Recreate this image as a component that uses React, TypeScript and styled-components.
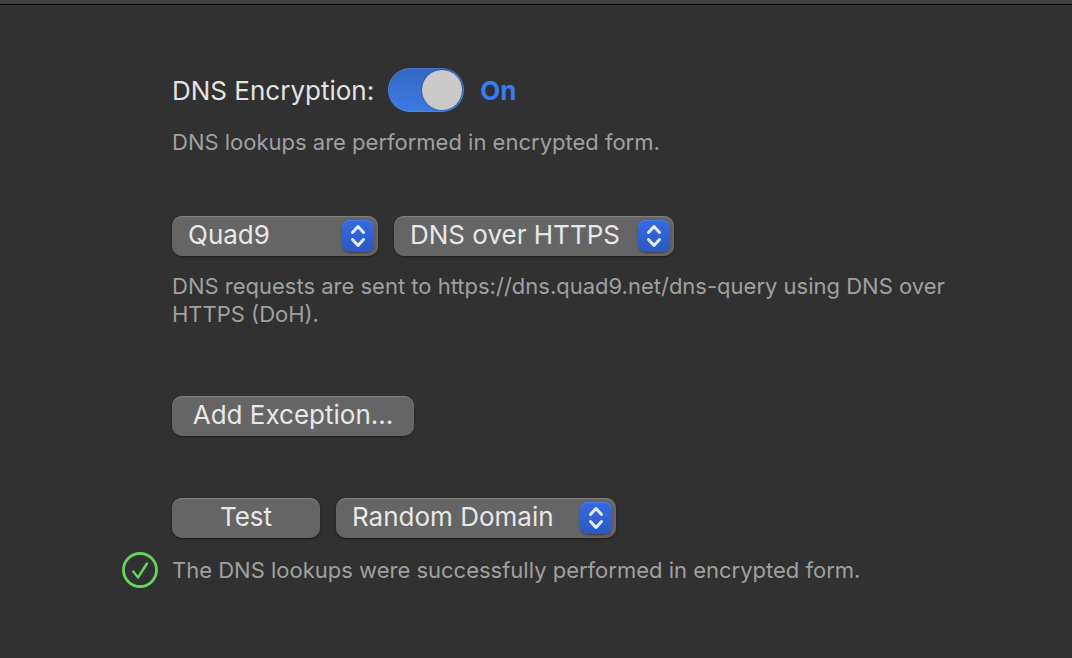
import React, { useState } from "react";
import styled, { createGlobalStyle } from "styled-components";

const GlobalStyle = createGlobalStyle`
  * { box-sizing: border-box; }
  body {
    margin: 0;
    background: #313131;
    color: #e3e3e3;
    font-family: Inter, "Liberation Sans", sans-serif;
    font-size: 26px;
    line-height: 32px;
  }
`;

const TitleEdge = styled.header`
  height: 5px;
  background: #404040;
  border-bottom: 1px solid #000;
`;

const Pane = styled.main`
  display: flex;
  flex-direction: column;
  align-items: flex-start;
  padding: 63px 100px 64px 172px;
`;

const Section = styled.section<{ $after?: number }>`
  width: 100%;
  margin-bottom: ${(p) => p.$after ?? 0}px;
`;

const Row = styled.div<{ $gap?: number }>`
  display: flex;
  align-items: center;
  gap: ${(p) => p.$gap ?? 16}px;
`;

const FieldLabel = styled.label`
  white-space: nowrap;
  padding-top: 2px;
`;

const Switch = styled.input`
  appearance: none;
  display: flex;
  align-items: center;
  width: 76px;
  height: 44px;
  margin: 0;
  padding: 2px;
  border-radius: 22px;
  background: #4b4b4b;
  box-shadow: inset 0 0 1px 1px rgba(255, 255, 255, 0.1);

  &::before {
    content: "";
    width: 40px;
    height: 40px;
    border-radius: 50%;
    background: #cacaca;
    box-shadow: 0 0 2px rgba(0, 0, 0, 0.5);
  }

  &:checked {
    justify-content: flex-end;
    background: linear-gradient(#3469c4, #3b7ae2);
  }
`;

const SwitchState = styled.strong`
  padding: 2px 0 0 2px;
  color: #3a7bf6;
  font-weight: 700;
`;

const Note = styled.p`
  margin: 16px 0 0;
  color: #a0a0a0;
  font-size: 22px;
  line-height: 28px;
`;

const Button = styled.button<{ $width: number }>`
  width: ${(p) => p.$width}px;
  height: 40px;
  padding: 0 0 2px;
  border: 0;
  border-radius: 10px;
  background: #656565;
  color: #e8e8e8;
  font: inherit;
  box-shadow: inset 0 1px 1px #838383, 0 1px 2px rgba(0, 0, 0, 0.45);
`;

const PopUp = styled.div<{ $width: number }>`
  display: grid;
  align-items: center;
  width: ${(p) => p.$width}px;
  height: 40px;
  border-radius: 10px;
  background: #656565;
  box-shadow: inset 0 1px 1px #838383, 0 1px 2px rgba(0, 0, 0, 0.45);

  & > * { grid-area: 1 / 1; }
`;

const PopUpSelect = styled.select`
  appearance: none;
  width: 100%;
  height: 40px;
  padding: 0 40px 2px 16px;
  border: 0;
  border-radius: 10px;
  background: transparent;
  color: #e8e8e8;
  font: inherit;
`;

const Stepper = styled.span`
  display: flex;
  justify-self: end;
  margin-right: 4px;
  border-radius: 8px;
  background: linear-gradient(#356ae0, #2a59c5);
  box-shadow: inset 0 1px 1px #4f7fe6, 0 1px 2px rgba(0, 0, 0, 0.4);
  pointer-events: none;
`;

const Status = styled.div`
  display: flex;
  align-items: center;
  gap: 14px;
  margin: 14px 0 0 -50px;
  color: #a0a0a0;
  font-size: 22px;
  line-height: 28px;
`;

const StatusIcon = styled.svg`
  flex: none;
`;

function Select({ label, width, options }: { label: string; width: number; options: string[] }) {
  return (
    <PopUp $width={width}>
      <PopUpSelect aria-label={label}>
        {options.map((o) => (
          <option key={o}>{o}</option>
        ))}
      </PopUpSelect>
      <Stepper>
        <svg width="32" height="32" viewBox="0 0 32 32" fill="none" stroke="#e6ecfa" strokeWidth="3" strokeLinecap="round" strokeLinejoin="round" aria-hidden="true">
          <path d="M10.500 12.500 16 6.500l5.500 6M10.500 19.500l5.500 6 5.500-6" />
        </svg>
      </Stepper>
    </PopUp>
  );
}

export default function App() {
  const [on, setOn] = useState(true);
  return (
    <>
      <GlobalStyle />
      <TitleEdge />
      <Pane>
        <Section $after={60}>
          <Row $gap={14}>
            <FieldLabel htmlFor="dns-encryption">DNS Encryption:</FieldLabel>
            <Switch id="dns-encryption" type="checkbox" role="switch" checked={on} onChange={() => setOn(!on)} />
            <SwitchState>{on ? "On" : "Off"}</SwitchState>
          </Row>
          <Note>DNS lookups are performed in encrypted form.</Note>
        </Section>
        <Section $after={68}>
          <Row>
            <Select label="DNS provider" width={206} options={["Quad9"]} />
            <Select label="Protocol" width={280} options={["DNS over HTTPS"]} />
          </Row>
          <Note>DNS requests are sent to https://dns.quad9.net/dns-query using DNS over HTTPS (DoH).</Note>
        </Section>
        <Section $after={62}>
          <Button type="button" $width={242}>Add Exception...</Button>
        </Section>
        <Section>
          <Row>
            <Button type="button" $width={148}>Test</Button>
            <Select label="Test domain" width={280} options={["Random Domain"]} />
          </Row>
          <Status role="status">
            <StatusIcon width="36" height="36" viewBox="0 0 36 36" fill="none" stroke="#65d65c" strokeLinecap="round" strokeLinejoin="round" aria-hidden="true">
              <circle cx="18" cy="18" r="16.500" strokeWidth="2.800" />
              <path d="M11.300 19.500l4.700 6L25 11.500" strokeWidth="2.400" />
            </StatusIcon>
            The DNS lookups were successfully performed in encrypted form.
          </Status>
        </Section>
      </Pane>
    </>
  );
}
